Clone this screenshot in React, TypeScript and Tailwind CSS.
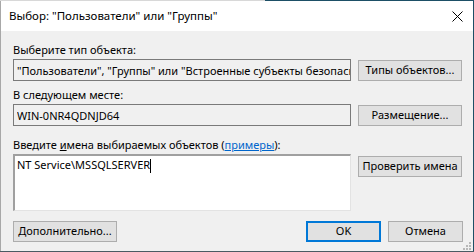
import React from "react";

const FONT = { fontFamily: '"Segoe UI", "Noto Sans", sans-serif' };

// Win10 style push button
const Btn: React.FC<{ label: React.ReactNode; w: string; primary?: boolean }> = ({
  label,
  w,
  primary,
}) => (
  <div
    className={`${w} h-[21px] flex items-center justify-center whitespace-nowrap bg-[#e1e1e1] text-[11px] text-black ${
      primary ? "border-2 border-[#0078d7]" : "border border-[#adadad]"
    }`}
  >
    {label}
  </div>
);

const Field: React.FC<{ value: string }> = ({ value }) => (
  <input
    readOnly
    value={value}
    className="w-[338px] shrink-0 h-[22px] border border-[#7a7a7a] bg-[#f0f0f0] pl-[3px] text-[11px] text-black outline-none"
    style={FONT}
  />
);

const GripDots = () => (
  <svg width="9" height="9" viewBox="0 0 9 9" className="absolute right-[1px] bottom-[1px]">
    {[
      [6, 0],
      [3, 3],
      [6, 3],
      [0, 6],
      [3, 6],
      [6, 6],
    ].map(([x, y], i) => (
      <rect key={i} x={x} y={y} width="2" height="2" fill="#b8b8b8" />
    ))}
  </svg>
);

export default function App() {
  return (
    <div className="w-[474px] h-[252px] relative bg-[#f0f0f0] overflow-hidden" style={FONT}>
      {/* window frame */}
      <div className="flex h-[1px]">
        <div className="w-[265px] bg-[#d8d8d8]" />
        <div className="flex-1 bg-[#1d4f66]" />
      </div>
      <div className="flex h-[251px]">
        <div className="w-[1px] bg-[#a8a8a8]" />
        <div className="flex-1 flex flex-col relative">
          {/* title bar */}
          <div className="h-[30px] bg-white flex items-center justify-between pl-[8px] pr-[10px]">
            <span className="text-[11.5px] text-black">Выбор: "Пользователи" или "Группы"</span>
            <svg width="11" height="11" viewBox="0 0 11 11">
              <path d="M0.5 0.5 L10.5 10.5 M10.5 0.5 L0.5 10.5" stroke="#000" strokeWidth="1" />
            </svg>
          </div>

          {/* body */}
          <div className="flex-1 flex flex-col pl-[12px] pr-[10px] pt-[11px] text-[11px] text-black">
            <div className="h-[16px] leading-[16px]">Выберите тип объекта:</div>
            <div className="flex gap-[7px] items-start mt-[1px]">
              <Field value={'"Пользователи", "Группы" или "Встроенные субъекты безопасности"'} />
              <div className="mt-[1px]">
                <Btn label="Типы объектов..." w="w-[104px]" />
              </div>
            </div>

            <div className="h-[16px] leading-[16px] mt-[6px]">В следующем месте:</div>
            <div className="flex gap-[7px] items-start mt-[1px]">
              <Field value="WIN-0NR4QDNJD64" />
              <div className="mt-[1px]">
                <Btn label="Размещение..." w="w-[104px]" />
              </div>
            </div>

            <div className="h-[16px] leading-[16px] mt-[11px]">
              Введите <span className="underline">и</span>мена выбираемых объектов (
              <span className="text-[#0066cc] underline">примеры</span>):
            </div>
            <div className="flex gap-[7px] items-start mt-[1px]">
              <div className="w-[338px] shrink-0 h-[57px] border-t-2 border-l-2 border-[#a0a0a0] border-r border-b border-r-[#e3e3e3] border-b-[#e3e3e3] bg-white pl-[2px] pt-[1px] leading-[16px]">
                <span>NT Service\MSSQLSERVER</span>
                <span className="inline-block w-[1px] h-[14px] bg-black align-middle" />
              </div>
              <div className="mt-[2px]">
                <Btn label="Проверить имена" w="w-[104px]" />
              </div>
            </div>

            <div className="flex items-center mt-[10px]">
              <Btn label="Дополнительно..." w="w-[104px]" />
              <div className="flex-1" />
              <div className="flex gap-[7px]">
                <Btn label="OK" w="w-[75px]" primary />
                <Btn label="Отмена" w="w-[75px]" />
              </div>
            </div>
          </div>
          <GripDots />
        </div>
        <div className="w-[1px] bg-[#1d4f66]" />
      </div>
      <div className="absolute left-0 bottom-0 w-full h-[1px] bg-[#4a5a62]" />
    </div>
  );
}
